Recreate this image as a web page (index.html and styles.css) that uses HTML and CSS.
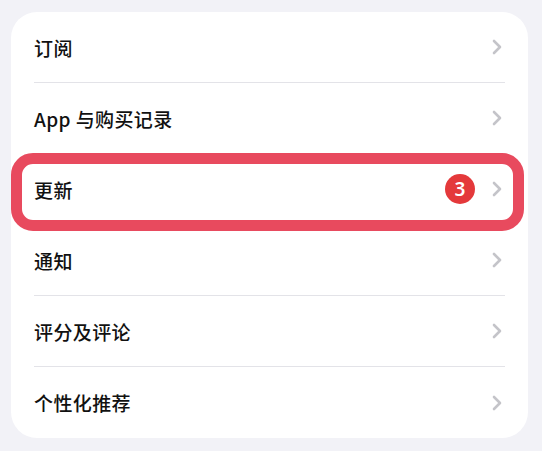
FILE: index.html
```html
<!DOCTYPE html>
<html lang="zh">
<head>
<meta charset="utf-8">
<link rel="stylesheet" href="styles.css">
</head>
<body>
<div class="page">
  <ul class="card">
    <li class="row"><span class="label">订阅</span><span class="end"><svg class="chev" viewBox="0 0 10 16"><polyline points="2,2 8,8 2,14"/></svg></span></li>
    <li class="row"><span class="label">App 与购买记录</span><span class="end"><svg class="chev" viewBox="0 0 10 16"><polyline points="2,2 8,8 2,14"/></svg></span></li>
    <li class="row"><span class="label">更新</span><span class="end"><span class="badge">3</span><svg class="chev" viewBox="0 0 10 16"><polyline points="2,2 8,8 2,14"/></svg></span></li>
    <li class="row"><span class="label">通知</span><span class="end"><svg class="chev" viewBox="0 0 10 16"><polyline points="2,2 8,8 2,14"/></svg></span></li>
    <li class="row"><span class="label">评分及评论</span><span class="end"><svg class="chev" viewBox="0 0 10 16"><polyline points="2,2 8,8 2,14"/></svg></span></li>
    <li class="row"><span class="label">个性化推荐</span><span class="end"><svg class="chev" viewBox="0 0 10 16"><polyline points="2,2 8,8 2,14"/></svg></span></li>
  </ul>
  <div class="highlight"></div>
</div>
</body>
</html>
```
FILE: styles.css
```css
html, body {
  margin: 0;
  padding: 0;
  background: #f2f2f7;
}
body {
  font-family: "Noto Sans CJK SC", "Noto Sans", sans-serif;
  color: #111;
}
.page {
  position: relative;
  width: 542px;
  height: 451px;
  padding: 12px 14px 0 11px;
  box-sizing: border-box;
}
.card {
  list-style: none;
  margin: 0;
  padding: 0 23px;
  background: #fff;
  border-radius: 26px;
  width: 517px;
  box-sizing: border-box;
}
.row {
  display: flex;
  align-items: center;
  justify-content: space-between;
  height: 70px;
  border-bottom: 1px solid #e3e3e8;
}
.row:last-child {
  border-bottom: none;
  height: 71px;
}
.label {
  font-size: 19px;
  font-weight: 500;
  letter-spacing: 0.4px;
}
.end {
  display: flex;
  align-items: center;
  gap: 17px;
  margin-right: 3px;
}
.chev {
  width: 10px;
  height: 16px;
  fill: none;
  stroke: #c4c4c9;
  stroke-width: 2.6;
  stroke-linecap: round;
  stroke-linejoin: round;
}
.badge {
  width: 30px;
  height: 30px;
  border-radius: 50%;
  background: #e4393b;
  color: #fff;
  font-family: "Noto Sans", sans-serif;
  font-weight: 600;
  font-size: 19px;
  display: flex;
  align-items: center;
  justify-content: center;
  line-height: 1;
}
.highlight {
  position: absolute;
  left: 11px;
  top: 153px;
  width: 513px;
  height: 78px;
  box-sizing: border-box;
  border: 11px solid #e84a5e;
  border-radius: 22px;
}
```
